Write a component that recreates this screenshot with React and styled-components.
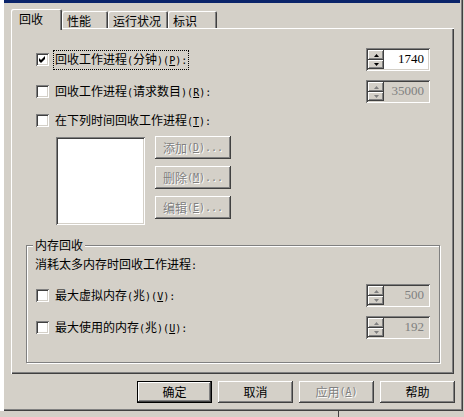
import React from 'react';
import styled, { createGlobalStyle, css } from 'styled-components';

const FACE = '#d4d0c8';
const SHADOW = '#808080';
const DARK = '#404040';

const GlobalStyle = createGlobalStyle`
  html, body {
    margin: 0;
    padding: 0;
    background: ${FACE};
  }
  body {
    font-family: "Noto Sans CJK SC", "Noto Sans", sans-serif;
    font-size: 12px;
    line-height: 14px;
    color: #000;
  }
`;

const raised = css`
  box-shadow: inset -1px -1px ${DARK}, inset 1px 1px #fff,
    inset -2px -2px ${SHADOW}, inset 2px 2px ${FACE};
`;

const sunken = css`
  box-shadow: inset 1px 1px ${SHADOW}, inset -1px -1px #fff,
    inset 2px 2px ${DARK}, inset -2px -2px ${FACE};
`;

const Screen = styled.div`
  display: flex;
  width: 464px;
  height: 417px;
  overflow: hidden;
  background: ${FACE};
`;

const Behind = styled.div`
  width: 3px;
  height: 411px;
  background: #fff;
`;

const Column = styled.div`
  display: flex;
  flex-direction: column;
  width: 460px;
`;

const Dialog = styled.div`
  display: flex;
  flex-direction: column;
  height: 411px;
  background: ${FACE};
  box-shadow: inset 1px 0 #fff, inset -1px -1px ${DARK}, inset -2px -2px ${SHADOW};
`;

const TitleEdge = styled.div`
  height: 3px;
  margin: 0 3px 0 1px;
  background: #0a246a;
`;

const DialogBody = styled.div`
  display: flex;
  flex-direction: column;
  padding: 6px 9px 0 8px;
`;

const TabStrip = styled.div`
  display: flex;
  align-items: flex-end;
  height: 19px;
`;

const Tab = styled.div`
  position: relative;
  box-sizing: border-box;
  width: ${p => p.$width}px;
  height: ${p => (p.$active ? 21 : 17)}px;
  margin-bottom: ${p => (p.$active ? -2 : 0)}px;
  padding: 3px 0 0 ${p => (p.$active ? 8 : 5)}px;
  background: ${FACE};
  border-radius: 2px 2px 0 0;
  box-shadow: inset 1px 1px #fff, inset -1px 0 ${DARK}, inset -2px 0 ${SHADOW};
  z-index: ${p => (p.$active ? 1 : 0)};
  white-space: nowrap;
`;

const Panel = styled.div`
  box-sizing: border-box;
  height: 346px;
  padding: 20px 14px 0 15px;
  box-shadow: inset 1px 1px #fff, inset -1px -1px ${DARK}, inset -2px -2px ${SHADOW};
`;

const TopSection = styled.div`
  display: flex;
  flex-direction: column;
  padding: 0 10px;
`;

const Row = styled.div`
  display: flex;
  align-items: center;
  height: 23px;
  margin-top: ${p => p.$gap || 0}px;
`;

const Box = styled.span`
  box-sizing: border-box;
  flex: none;
  display: flex;
  align-items: center;
  justify-content: center;
  width: 13px;
  height: 13px;
  background: #fff;
  ${sunken};
`;

const Label = styled.span`
  margin-left: 5px;
  padding: 1px 1px;
  outline: ${p => (p.$focused ? '1px dotted #000' : 'none')};
  white-space: nowrap;
`;

/* half-width latin run, 6px per glyph like the bitmap dialog font */
const Half = styled.span`
  font-family: "DejaVu Sans Mono", "Liberation Mono", monospace;
  font-size: 10px;
`;

const Key = styled.span`
  text-decoration: underline;
`;

const SpinBox = styled.div`
  box-sizing: border-box;
  display: flex;
  width: 64px;
  height: 23px;
  margin-left: auto;
  padding: 2px;
  background: ${p => (p.$disabled ? FACE : '#fff')};
  ${sunken};
`;

const SpinButtons = styled.div`
  display: flex;
  flex-direction: column;
  width: 16px;
`;

const SpinButton = styled.div`
  display: flex;
  align-items: center;
  justify-content: center;
  height: ${p => p.$h}px;
  background: ${FACE};
  ${raised};
`;

const SpinValue = styled.span`
  flex: 1;
  padding: 2px 4px 0 0;
  text-align: right;
  font-family: "Liberation Serif", serif;
  font-size: 13px;
  color: ${p => (p.$disabled ? SHADOW : '#000')};
`;

const ListArea = styled.div`
  display: flex;
  gap: 10px;
  margin-top: 4px;
  padding-left: 20px;
`;

const ListBox = styled.div`
  width: 89px;
  height: 88px;
  margin-top: 1px;
  background: #fff;
  ${sunken};
`;

const SideButtons = styled.div`
  display: flex;
  flex-direction: column;
  gap: 7px;
`;

const Button = styled.div`
  box-sizing: border-box;
  display: flex;
  align-items: center;
  justify-content: center;
  width: ${p => p.$width}px;
  height: ${p => p.$height}px;
  background: ${FACE};
  color: ${p => (p.$disabled ? SHADOW : '#000')};
  text-shadow: ${p => (p.$disabled ? '1px 1px #fff' : 'none')};
  white-space: nowrap;
  ${p =>
    p.$default
      ? css`
          box-shadow: inset 0 0 0 1px #000, inset -2px -2px ${DARK}, inset 2px 2px #fff,
            inset -3px -3px ${SHADOW};
        `
      : raised};
`;

const GroupBox = styled.fieldset`
  box-sizing: border-box;
  min-width: 0;
  margin: 13px 0 0 0;
  padding: 0 9px 23px 9px;
  border: 1px solid ${SHADOW};
  box-shadow: inset 1px 1px #fff, 1px 1px #fff;
`;

const Legend = styled.legend`
  margin-left: -3px;
  padding: 0 2px;
  background: ${FACE};
  line-height: 14px;
`;

const GroupText = styled.div`
  margin-top: 5px;
  margin-left: -1px;
`;

const ButtonBar = styled.div`
  display: flex;
  justify-content: flex-end;
  gap: 6px;
  margin: 7px -1px 0 0;
`;

const BelowStrip = styled.div`
  flex: 1;
  padding-left: 335px;
  display: flex;
`;

const BelowMark = styled.div`
  border-left: 1px solid ${DARK};
`;

const ASCII = /^[\x20-\x7e]+$/;

const runs = str =>
  str
    .split(/([\x20-\x7e]+)/)
    .filter(Boolean)
    .map((r, i) => (ASCII.test(r) ? <Half key={i}>{r}</Half> : r));

const Caption = ({ text, hotkey, tail = '' }) => (
  <>
    {runs(text)}
    <Half>
      (<Key>{hotkey}</Key>){tail}
    </Half>
  </>
);

const Check = () => (
  <svg width="7" height="7" viewBox="0 0 7 7">
    <path d="M0 2 L2 4 L6 0 L6 3 L2 7 L0 5 Z" fill="#000" />
  </svg>
);

const Arrow = ({ up, disabled }) => (
  <svg width="5" height="3" viewBox="0 0 5 3">
    <path
      d={up ? 'M2.5 0 L5 3 L0 3 Z' : 'M0 0 L5 0 L2.5 3 Z'}
      fill={disabled ? SHADOW : '#000'}
    />
  </svg>
);

const Spinner = ({ value, disabled }) => (
  <SpinBox $disabled={disabled}>
    <SpinButtons>
      <SpinButton $h={10}>
        <Arrow up disabled={disabled} />
      </SpinButton>
      <SpinButton $h={9}>
        <Arrow disabled={disabled} />
      </SpinButton>
    </SpinButtons>
    <SpinValue $disabled={disabled}>{value}</SpinValue>
  </SpinBox>
);

const CheckRow = ({ gap, checked, focused, text, hotkey, spinner }) => (
  <Row $gap={gap}>
    <Box>{checked && <Check />}</Box>
    <Label $focused={focused}>
      <Caption text={text} hotkey={hotkey} tail=":" />
    </Label>
    {spinner}
  </Row>
);

const tabs = [
  { name: '回收', width: 51, active: true },
  { name: '性能', width: 46 },
  { name: '运行状况', width: 60 },
  { name: '标识', width: 49 },
];

const App = () => (
  <>
    <GlobalStyle />
    <Screen>
      <Behind />
      <Column>
        <Dialog>
          <TitleEdge />
          <DialogBody>
            <TabStrip>
              {tabs.map(t => (
                <Tab key={t.name} $width={t.width} $active={t.active}>
                  {t.name}
                </Tab>
              ))}
            </TabStrip>

            <Panel>
              <TopSection>
                <CheckRow
                  checked
                  focused
                  text="回收工作进程(分钟)"
                  hotkey="P"
                  spinner={<Spinner value="1740" />}
                />
                <CheckRow
                  gap={9}
                  text="回收工作进程(请求数目)"
                  hotkey="R"
                  spinner={<Spinner value="35000" disabled />}
                />
                <CheckRow gap={6} text="在下列时间回收工作进程" hotkey="T" />

                <ListArea>
                  <ListBox />
                  <SideButtons>
                    <Button $width={76} $height={23} $disabled>
                      <Caption text="添加" hotkey="D" tail="..." />
                    </Button>
                    <Button $width={76} $height={23} $disabled>
                      <Caption text="删除" hotkey="M" tail="..." />
                    </Button>
                    <Button $width={76} $height={23} $disabled>
                      <Caption text="编辑" hotkey="E" tail="..." />
                    </Button>
                  </SideButtons>
                </ListArea>
              </TopSection>

              <GroupBox>
                <Legend>内存回收</Legend>
                <GroupText>
                  消耗太多内存时回收工作进程<Half>:</Half>
                </GroupText>
                <CheckRow
                  gap={11}
                  text="最大虚拟内存(兆)"
                  hotkey="V"
                  spinner={<Spinner value="500" disabled />}
                />
                <CheckRow
                  gap={9}
                  text="最大使用的内存(兆)"
                  hotkey="U"
                  spinner={<Spinner value="192" disabled />}
                />
              </GroupBox>
            </Panel>

            <ButtonBar>
              <Button $width={75} $height={22} $default>确定</Button>
              <Button $width={75} $height={22}>取消</Button>
              <Button $width={75} $height={22} $disabled>
                <Caption text="应用" hotkey="A" />
              </Button>
              <Button $width={75} $height={22}>帮助</Button>
            </ButtonBar>
          </DialogBody>
        </Dialog>
        <BelowStrip>
          <BelowMark />
        </BelowStrip>
      </Column>
    </Screen>
  </>
);

export default App;
